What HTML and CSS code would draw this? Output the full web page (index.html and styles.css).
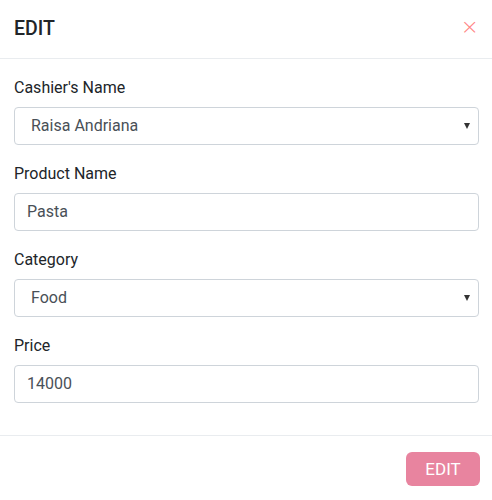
FILE: index.html
```html
<!DOCTYPE html>
<html>
<head>
<meta charset="utf-8">
<link rel="stylesheet" href="styles.css">
</head>
<body>
<div class="modal">
  <div class="modal-header">
    <h5 class="modal-title">EDIT</h5>
    <span class="close">&times;</span>
  </div>
  <div class="modal-body">
    <div class="form-group">
      <label class="label">Cashier's Name</label>
      <div class="control select"><span class="sel-text">Raisa Andriana</span><span class="caret"></span></div>
    </div>
    <div class="form-group">
      <label class="label">Product Name</label>
      <div class="control">Pasta</div>
    </div>
    <div class="form-group">
      <label class="label">Category</label>
      <div class="control select"><span class="sel-text">Food</span><span class="caret"></span></div>
    </div>
    <div class="form-group">
      <label class="label">Price</label>
      <div class="control">14000</div>
    </div>
  </div>
  <div class="modal-footer">
    <button class="btn">EDIT</button>
  </div>
</div>
</body>
</html>
```
FILE: styles.css
```css
* { box-sizing: border-box; }
html, body { margin: 0; padding: 0; background: #fff; }
body {
  font-family: Roboto, "Liberation Sans", sans-serif;
  font-size: 16px;
  line-height: 1.5;
  color: #212529;
}
.modal { width: 492px; }
.modal-header {
  height: 59px;
  display: flex;
  align-items: center;
  justify-content: space-between;
  padding: 0 13px 0 14px;
  border-bottom: 1px solid #e9ecef;
}
.modal-title {
  margin: 0;
  font-size: 19.5px;
  font-weight: 500;
  line-height: 27px;
  color: #212529;
  position: relative;
  top: -1px;
}
.close {
  color: #ff8585;
  font-size: 22px;
  line-height: 1;
  font-family: "DejaVu Sans", sans-serif;
  font-weight: 300;
  position: relative;
  top: -2px;
}
.modal-body { padding: 16px 13px 16px 14px; }
.form-group { margin-bottom: 16px; }
.label { display: block; padding-top: 1px; margin: 0 0 7px; line-height: 24px; }
.control {
  height: 38px;
  border: 1px solid #ced4da;
  border-radius: 4px;
  padding: 0 12px;
  display: flex;
  align-items: center;
  color: #495057;
}
.select .sel-text { padding-left: 4px; flex: 1; }
.caret {
  width: 0; height: 0;
  border-left: 3.5px solid transparent;
  border-right: 3.5px solid transparent;
  border-top: 6px solid #333;
  margin-right: -4px;
}
.modal-footer {
  border-top: 1px solid #e9ecef;
  padding: 16px 12px 14px 14px;
  display: flex;
  justify-content: flex-end;
}
.btn {
  width: 74px;
  height: 34px;
  background: #e8849f;
  color: #fff;
  border: none;
  border-radius: 6px;
  font-family: Roboto, "Liberation Sans", sans-serif;
  font-size: 17px;
  padding: 0;
}
```
